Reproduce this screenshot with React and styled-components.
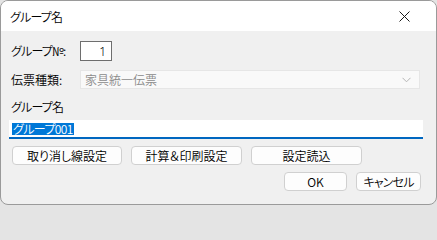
import React from "react";
import styled, { createGlobalStyle } from "styled-components";

const Global = createGlobalStyle`
  html, body { margin: 0; padding: 0; background: #e4e4e4; }
  body { font-family: "Noto Sans CJK JP", "Noto Sans", sans-serif; font-size: 12px; color: #000; font-weight: 350; }
  * { box-sizing: border-box; }
`;

const Window = styled.div`
  width: 437px;
  height: 205px;
  border: 1px solid #9a9a9a;
  border-radius: 8px;
  overflow: hidden;
  background: #f0f0f0;
  display: flex;
  flex-direction: column;
  font-feature-settings: "palt";
`;

const TitleBar = styled.div`
  height: 30px;
  background: #ffffff;
  display: flex;
  align-items: center;
  justify-content: space-between;
  padding: 0 26px 0 9px;
  flex-shrink: 0;
`;

const Kana = styled.span`
  letter-spacing: ${(p) => p.$ls ?? -0.8}px;
`;

const Title = styled(Kana)`
  font-size: 12px;
  line-height: 14px;
  margin-top: 1px;
`;

const Close = styled.svg`
  width: 11px;
  height: 11px;
`;

const Content = styled.div`
  display: flex;
  flex-direction: column;
  padding: 9px 13px 0 9px;
`;

const Row = styled.div`
  display: flex;
  align-items: center;
  height: ${(p) => p.$h || 20}px;
  margin-top: ${(p) => p.$mt || 0}px;
`;

const Label = styled.span`
  width: ${(p) => p.$w || 70}px;
  padding-left: 1px;
  font-size: 12px;
  line-height: 16px;
  flex-shrink: 0;
`;

const NumBox = styled.div`
  width: 32px;
  height: 20px;
  border: 1px solid #6e6e6e;
  background: #fff;
  display: flex;
  align-items: center;
  justify-content: flex-end;
  padding-right: 5px;
  font-size: 12px;
  font-family: "Noto Sans", sans-serif;
`;

const Select = styled.div`
  flex: 1;
  height: 19px;
  margin-right: 3px;
  border: 1px solid #e6e6e6;
  background: #f9f9f9;
  display: flex;
  align-items: center;
  justify-content: space-between;
  padding: 0 8px 0 4px;
  color: #8a8a8a;
  font-size: 12px;
`;

const Chevron = styled.svg`
  width: 9px;
  height: 6px;
`;

const TextInput = styled.div`
  height: 19px;
  margin-top: 5px;
  margin-left: -1px;
  background: #fff;
  border-bottom: 2px solid #0067c0;
  display: flex;
  align-items: center;
  padding-left: 3px;
`;

const Selected = styled.span`
  background: #0078d7;
  color: #fff;
  font-size: 12px;
  line-height: 13px;
  height: 12px;
  display: flex;
  align-items: center;
  padding: 0 1px;
  letter-spacing: -0.6px;
`;

const ButtonRow = styled.div`
  display: flex;
  gap: 9px;
  margin-top: 7px;
  padding-left: 2px;
  justify-content: ${(p) => (p.$end ? "flex-end" : "flex-start")};
  padding-right: ${(p) => (p.$end ? 2 : 0)}px;
`;

const Button = styled.button`
  width: ${(p) => p.$w}px;
  height: 19px;
  border: 1px solid #d0d0d0;
  border-radius: 4px;
  background: #fdfdfd;
  font-family: inherit;
  font-weight: 350;
  font-feature-settings: "palt";
  font-size: 12px;
  color: #000;
  padding: 0;
  display: flex;
  align-items: center;
  justify-content: center;
`;

export default function App() {
  return (
    <>
      <Global />
      <Window>
        <TitleBar>
          <Title>グループ名</Title>
          <Close viewBox="0 0 11 11">
            <path d="M0.5 0.5 L10.5 10.5 M10.5 0.5 L0.5 10.5" stroke="#1a1a1a" strokeWidth="1" fill="none" />
          </Close>
        </TitleBar>
        <Content>
          <Row $h={20} $mt={1}>
            <Label>
              <Kana>グループ№:</Kana>
            </Label>
            <NumBox>1</NumBox>
          </Row>
          <Row $h={19} $mt={9}>
            <Label>伝票種類:</Label>
            <Select>
              <span>家具統一伝票</span>
              <Chevron viewBox="0 0 9 6">
                <path d="M0.5 0.8 L4.5 4.8 L8.5 0.8" stroke="#b5b5b5" strokeWidth="1" fill="none" />
              </Chevron>
            </Select>
          </Row>
          <Row $h={16} $mt={10}>
            <Label>
              <Kana>グループ名</Kana>
            </Label>
          </Row>
          <TextInput>
            <Selected>グループ001</Selected>
          </TextInput>
          <ButtonRow>
            <Button $w={110}>取り消し線設定</Button>
            <Button $w={111}>計算＆印刷設定</Button>
            <Button $w={111}>設定読込</Button>
          </ButtonRow>
          <ButtonRow $end>
            <Button $w={63}>OK</Button>
            <Button $w={65}>
              <Kana>キャンセル</Kana>
            </Button>
          </ButtonRow>
        </Content>
      </Window>
    </>
  );
}
